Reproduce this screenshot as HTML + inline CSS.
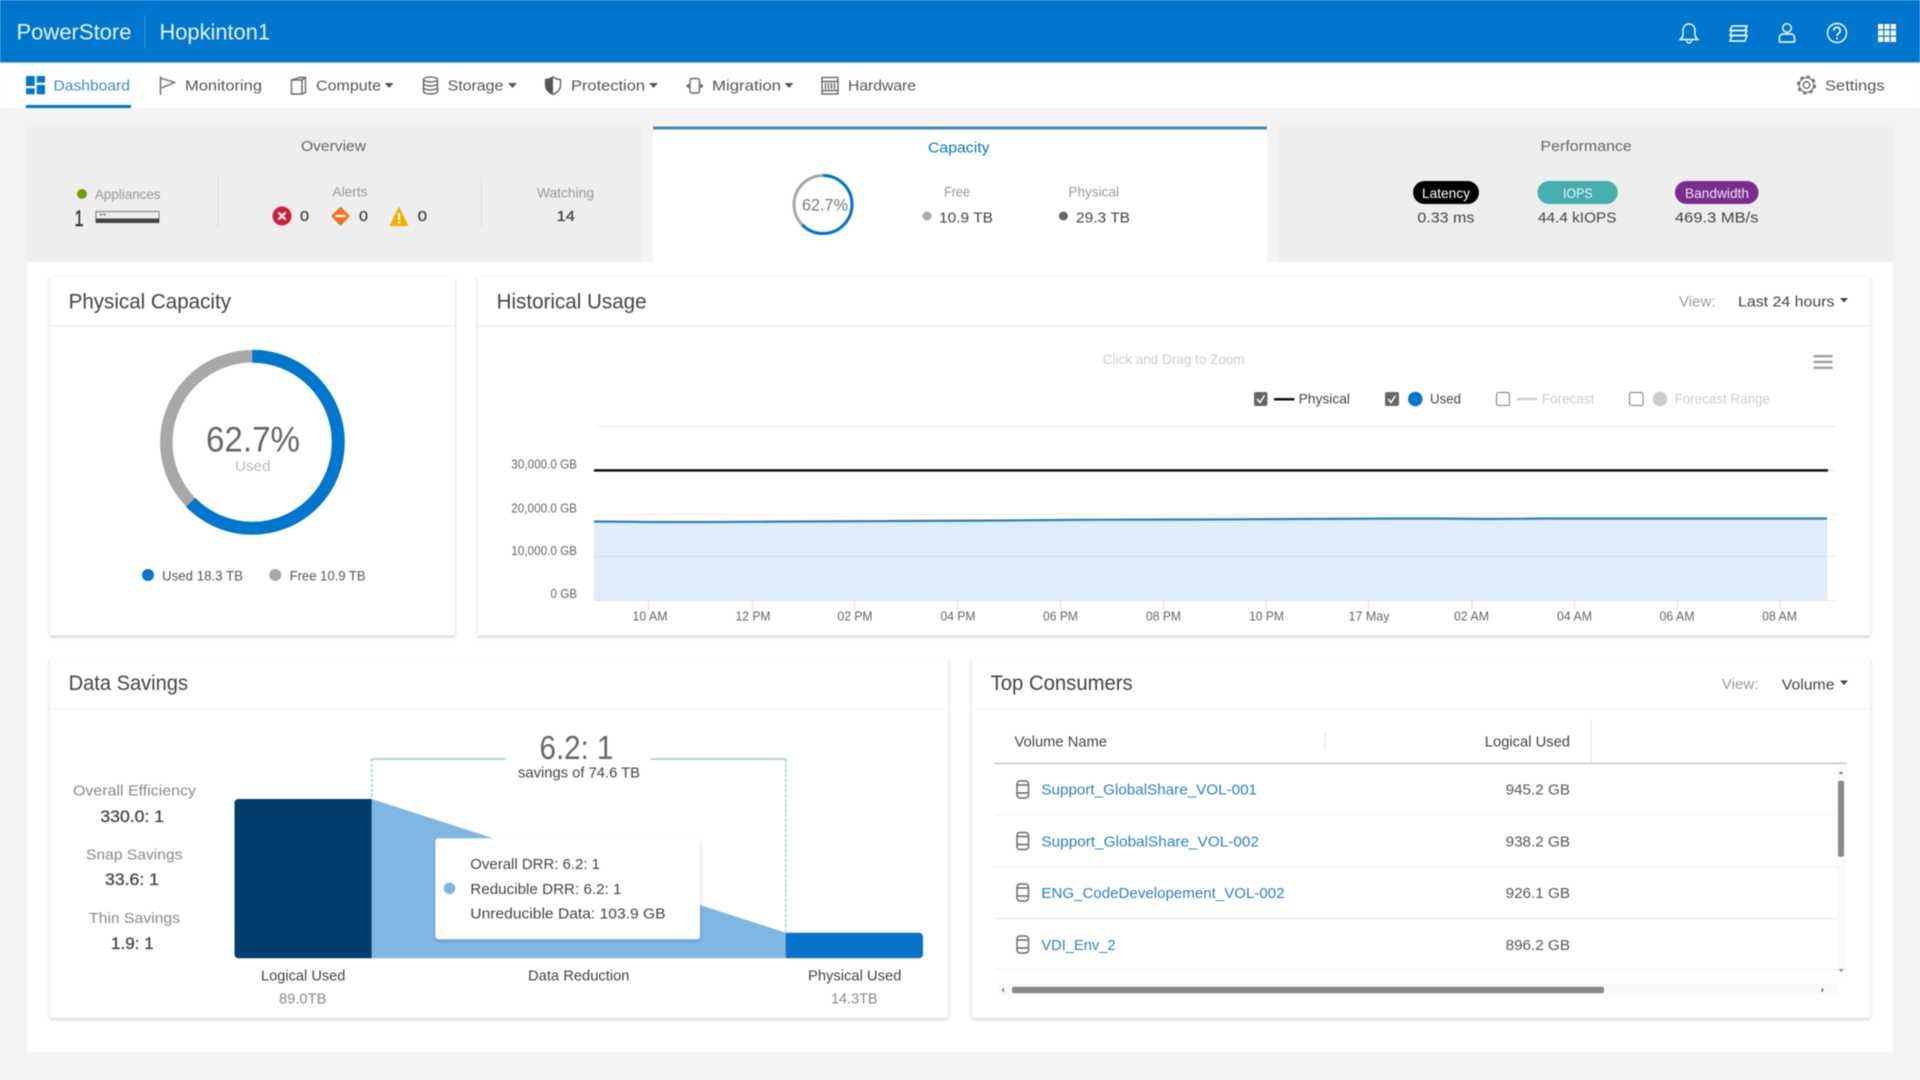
<!DOCTYPE html>
<html lang="en">
<head>
<meta charset="utf-8">
<title>PowerStore Dashboard</title>
<style>
html,body{margin:0;padding:0;width:1920px;height:1080px;overflow:hidden;background:#f3f3f3}
svg{display:block;filter:blur(.55px)}
text{font-family:"Liberation Sans",sans-serif;font-size:15px;fill:#444}
.nav{font-size:15px;fill:#555}
.g{fill:#8a8a8a}
.lg{fill:#999;font-size:14px}
.d{fill:#444}
.h{font-size:21px;fill:#444}
.t{font-size:22px;fill:#e8f3fb}
.c{font-size:12.5px;fill:#666}
.ic{fill:none;stroke:#666;stroke-width:1.4}
.w{fill:none;stroke:#fff;stroke-width:1.4}
.l{fill:#2a7fc4;font-size:15px}
.m{stroke:#444;stroke-width:.3}
</style>
</head>
<body>
<svg width="1920" height="1080" viewBox="0 0 1920 1080" xmlns="http://www.w3.org/2000/svg">
<defs>
<filter id="s" x="-5%" y="-5%" width="110%" height="112%"><feDropShadow dx="0" dy="1.5" stdDeviation="1.6" flood-color="#000" flood-opacity=".22"/></filter>
</defs>
<rect width="1920" height="1080" fill="#f3f3f3"/>

<!-- header -->
<rect width="1920" height="62" fill="#0076ce"/>
<rect y="62" width="1920" height="1" fill="#7db8e6"/>
<text class="t" x="16.5" y="39.5" textLength="115" lengthAdjust="spacingAndGlyphs">PowerStore</text>
<rect x="144.5" y="15" width="1" height="33" fill="#3a93d8"/>
<text class="t" x="159.5" y="39.5" textLength="110.5" lengthAdjust="spacingAndGlyphs">Hopkinton1</text>

<g class="w">
<path d="M1689 24c-4 0-6 3-6 7v4c0 2-1.800 3-3 4.500h18c-1.200-1.500-3-2.500-3-4.500v-4c0-4-2-7-6-7z"/>
<path d="M1686.500 40.500a2.500 2.500 0 0 0 5 0"/>
<path d="M1732 26H1747L1745 30.500H1730Z"/>
<path d="M1732 30.500H1747L1745 35.500H1730Z"/>
<path d="M1732 35.500H1747L1745 41H1730Z"/>
<circle cx="1787" cy="28" r="4.300"/>
<path d="M1779.500 42v-4.500c0-2 1.500-3.500 3.500-3.500h8c2 0 3.500 1.500 3.500 3.500v4.500z"/>
<circle cx="1837" cy="33" r="9.500"/>
<path d="M1833.800 30.500a3.200 3.200 0 1 1 5 2.600c-1.100.8-1.800 1.400-1.800 2.900" stroke-width="1.600"/>
</g>
<circle cx="1837" cy="38.500" r="1" fill="#fff"/>
<g fill="#fff">
<rect x="1878" y="24" width="5.200" height="5.200"/><rect x="1884.400" y="24" width="5.200" height="5.200"/><rect x="1890.800" y="24" width="5.200" height="5.200"/>
<rect x="1878" y="30.400" width="5.200" height="5.200"/><rect x="1884.400" y="30.400" width="5.200" height="5.200"/><rect x="1890.800" y="30.400" width="5.200" height="5.200"/>
<rect x="1878" y="36.800" width="5.200" height="5.200"/><rect x="1884.400" y="36.800" width="5.200" height="5.200"/><rect x="1890.800" y="36.800" width="5.200" height="5.200"/>
</g>

<!-- nav -->
<rect y="63" width="1920" height="45" fill="#fff"/>
<g fill="#0076ce">
<rect x="26" y="76" width="8.700" height="10"/><rect x="36.700" y="76" width="8.300" height="6.700"/>
<rect x="26" y="88.300" width="8.700" height="6"/><rect x="36.700" y="85" width="8.300" height="9.300"/>
</g>
<text class="nav" style="fill:#3a8bcc" x="53.500" y="90.500" textLength="76.500" lengthAdjust="spacingAndGlyphs">Dashboard</text>
<rect x="26" y="105" width="105" height="3" fill="#0076ce"/>

<path class="ic" d="M160.500 76.500v18.500M160.500 78l14 4.500-13 5.500"/>
<text class="nav" x="185" y="90.500" textLength="77" lengthAdjust="spacingAndGlyphs">Monitoring</text>

<path class="ic" d="M291.500 80L300 77.500H305.500V92.500L302 94H291.500ZM302 80V94M291.500 80H302L305.500 77.500"/>
<text class="nav" x="316" y="90.500" textLength="65" lengthAdjust="spacingAndGlyphs">Compute</text>
<path d="M384.600 83h9l-4.500 5z" fill="#555"/>

<g class="ic">
<ellipse cx="430.500" cy="79.500" rx="7" ry="2.500"/>
<path d="M423.500 79.500v12c0 1.400 3 2.500 7 2.500s7-1.100 7-2.500v-12M423.500 83.500c0 1.400 3 2.500 7 2.500s7-1.100 7-2.500M423.500 87.500c0 1.400 3 2.500 7 2.500s7-1.100 7-2.500"/>
</g>
<text class="nav" x="447.600" y="90.500" textLength="55.800" lengthAdjust="spacingAndGlyphs">Storage</text>
<path d="M508 83h9l-4.500 5z" fill="#555"/>

<path class="ic" d="M553 77c-3 2-6 2.500-7.500 2.500v5.500c0 5 3.500 7.500 7.500 9.500 4-2 7.500-4.500 7.500-9.500v-5.500c-1.500 0-4.500-.5-7.500-2.500z"/>
<path d="M553 77c-3 2-6 2.500-7.500 2.500v5.500c0 5 3.500 7.500 7.500 9.500z" fill="#555"/>
<text class="nav" x="571" y="90.500" textLength="74" lengthAdjust="spacingAndGlyphs">Protection</text>
<path d="M649 83h9l-4.500 5z" fill="#555"/>

<rect class="ic" x="690" y="78.500" width="9.500" height="14.500" rx="2"/>
<path d="M689 83.500l-3 2.500 3 2.500zM700.500 83.500l3 2.500-3 2.500z" fill="#555"/>
<text class="nav" x="712" y="90.500" textLength="69" lengthAdjust="spacingAndGlyphs">Migration</text>
<path d="M784.500 83h9l-4.500 5z" fill="#555"/>

<rect class="ic" x="822" y="77.500" width="16" height="16.500"/>
<path class="ic" d="M822 81.500h16M825.500 83v6M828.500 83v6M831.500 83v6M834.500 83v6M822 90.500h16"/>
<text class="nav" x="848" y="90.500" textLength="68" lengthAdjust="spacingAndGlyphs">Hardware</text>

<circle cx="1806.500" cy="85" r="3.300" fill="none" stroke="#666" stroke-width="1.300"/>
<circle cx="1806.500" cy="85" r="7.300" fill="none" stroke="#666" stroke-width="1.200"/>
<circle cx="1806.500" cy="85" r="8.700" fill="none" stroke="#666" stroke-width="1.700" stroke-dasharray="3.300 3.530"/>
<text class="nav" x="1825" y="90.500" textLength="59.700" lengthAdjust="spacingAndGlyphs">Settings</text>

<!-- white body panel -->
<rect x="27" y="262" width="1866" height="790" fill="#fff"/>

<!-- tabs -->
<rect x="27" y="127" width="615" height="135" fill="#eeeeee"/>
<rect x="653" y="126.500" width="614" height="136" fill="#fff"/>
<rect x="653" y="126.500" width="614" height="3" fill="#3f87c0"/>
<rect x="1278.500" y="127" width="615" height="135" fill="#eeeeee"/>

<!-- overview -->
<text x="301" y="151" style="fill:#666" textLength="65" lengthAdjust="spacingAndGlyphs">Overview</text>
<circle cx="82" cy="194" r="5" fill="#6ea204"/>
<text class="lg" x="95" y="199" textLength="65.500" lengthAdjust="spacingAndGlyphs">Appliances</text>
<text x="74.500" y="226" style="font-size:22px;fill:#333;stroke:#333;stroke-width:.4" textLength="9" lengthAdjust="spacingAndGlyphs">1</text>
<rect x="96" y="211.500" width="63" height="11" fill="#eee" stroke="#777" stroke-width="1"/>
<rect x="96" y="218.500" width="63" height="4.500" fill="#444"/>
<rect x="100" y="213.500" width="2" height="2" fill="#777"/><rect x="103.500" y="213.500" width="2" height="2" fill="#777"/>
<rect x="217.500" y="177" width="1" height="50" fill="#d8d8d8"/>
<text class="lg" x="332.500" y="196.700" textLength="35" lengthAdjust="spacingAndGlyphs">Alerts</text>
<circle cx="282" cy="216" r="9.500" fill="#ce1f3d"/>
<path d="M278.500 212.500l7 7M285.500 212.500l-7 7" stroke="#fff" stroke-width="2.200"/>
<text class="m" x="300" y="221" textLength="9" lengthAdjust="spacingAndGlyphs">0</text>
<path d="M340.500 206.500l9.500 9.500-9.500 10-9.500-10z" fill="#e87722"/>
<rect x="335.500" y="215" width="10" height="2" fill="#fff"/>
<text class="m" x="359" y="221" textLength="9" lengthAdjust="spacingAndGlyphs">0</text>
<path d="M399 206.500l9.500 19.500h-19z" fill="#f2af00"/>
<rect x="398" y="213" width="2" height="7" fill="#fff"/><rect x="398" y="221.500" width="2" height="2" fill="#fff"/>
<text class="m" x="417.600" y="221" textLength="9.400" lengthAdjust="spacingAndGlyphs">0</text>
<rect x="481" y="177" width="1" height="50" fill="#d8d8d8"/>
<text class="lg" x="537" y="197.500" textLength="57" lengthAdjust="spacingAndGlyphs">Watching</text>
<text class="m" x="556.600" y="221" textLength="18.400" lengthAdjust="spacingAndGlyphs">14</text>

<!-- capacity -->
<text x="928" y="152.700" style="fill:#0076ce;font-size:15px" textLength="61.500" lengthAdjust="spacingAndGlyphs">Capacity</text>
<circle cx="823" cy="204.500" r="29" fill="none" stroke="#a8a8a8" stroke-width="3"/>
<circle cx="823" cy="204.500" r="29" fill="none" stroke="#0076ce" stroke-width="3" stroke-dasharray="114.200 182.200" transform="rotate(-90 823 204.500)"/>
<text x="802" y="210.500" style="font-size:17px;fill:#777" textLength="46" lengthAdjust="spacingAndGlyphs">62.7%</text>
<text class="lg" x="944" y="196.500" textLength="26" lengthAdjust="spacingAndGlyphs">Free</text>
<circle cx="927" cy="216" r="4.500" fill="#aaa"/>
<text x="939" y="222.500" textLength="54" lengthAdjust="spacingAndGlyphs">10.9 TB</text>
<text class="lg" x="1068.400" y="196.500" textLength="50.600" lengthAdjust="spacingAndGlyphs">Physical</text>
<circle cx="1063.400" cy="216" r="4.500" fill="#666"/>
<text x="1076" y="222.500" textLength="54" lengthAdjust="spacingAndGlyphs">29.3 TB</text>

<!-- performance -->
<text x="1540.500" y="151" style="fill:#666" textLength="91.300" lengthAdjust="spacingAndGlyphs">Performance</text>
<rect x="1413" y="181" width="66" height="23" rx="11.500" fill="#000"/>
<text x="1422" y="198" style="fill:#fff;font-size:14px" textLength="48" lengthAdjust="spacingAndGlyphs">Latency</text>
<rect x="1537.500" y="181" width="80.200" height="23" rx="11.500" fill="#45aeae"/>
<text x="1563" y="198" style="fill:#e8f5f5;font-size:14px" textLength="29.600" lengthAdjust="spacingAndGlyphs">IOPS</text>
<rect x="1675" y="181" width="83.500" height="23" rx="11.500" fill="#7b2c8f"/>
<text x="1685" y="198" style="fill:#f0e6f3;font-size:14px" textLength="64" lengthAdjust="spacingAndGlyphs">Bandwidth</text>
<text x="1417.400" y="222.500" textLength="57" lengthAdjust="spacingAndGlyphs">0.33 ms</text>
<text x="1538" y="222.500" textLength="78.500" lengthAdjust="spacingAndGlyphs">44.4 kIOPS</text>
<text x="1675" y="222.500" textLength="83.500" lengthAdjust="spacingAndGlyphs">469.3 MB/s</text>

<!-- cards -->
<rect x="50" y="277" width="405" height="358.500" fill="#fff" filter="url(#s)"/>
<rect x="477.600" y="277" width="1392.400" height="358.500" fill="#fff" filter="url(#s)"/>
<rect x="50" y="659.300" width="898" height="358.700" fill="#fff" filter="url(#s)"/>
<rect x="972" y="659.300" width="898" height="358.700" fill="#fff" filter="url(#s)"/>
<rect x="50" y="325" width="405" height="1.200" fill="#ececec"/>
<rect x="477.600" y="325" width="1392.400" height="1.200" fill="#ececec"/>
<rect x="50" y="708.500" width="898" height="1" fill="#f4f4f4"/>
<rect x="972" y="708.500" width="898" height="1" fill="#f4f4f4"/>

<!-- physical capacity -->
<text class="h" x="68.600" y="308.500" textLength="162.400" lengthAdjust="spacingAndGlyphs">Physical Capacity</text>
<circle cx="252.300" cy="442.300" r="86" fill="none" stroke="#a8a8a8" stroke-width="12.500"/>
<circle cx="252.300" cy="442.300" r="86" fill="none" stroke="#0076ce" stroke-width="13" stroke-dasharray="338.800 201.600" transform="rotate(-90 252.300 442.300)"/>
<text x="206" y="451.700" style="font-size:35px;fill:#666" textLength="94" lengthAdjust="spacingAndGlyphs">62.7%</text>
<text x="235" y="471" style="font-size:15px;fill:#bbb" textLength="35.700" lengthAdjust="spacingAndGlyphs">Used</text>
<circle cx="148" cy="575" r="6" fill="#0076ce"/>
<text x="162" y="580.700" style="font-size:14px;fill:#555" textLength="81" lengthAdjust="spacingAndGlyphs">Used 18.3 TB</text>
<circle cx="275.300" cy="575" r="6" fill="#a8a8a8"/>
<text x="289.600" y="580.700" style="font-size:14px;fill:#555" textLength="76" lengthAdjust="spacingAndGlyphs">Free 10.9 TB</text>

<!-- historical usage -->
<text class="h" x="496.600" y="308.500" textLength="150" lengthAdjust="spacingAndGlyphs">Historical Usage</text>
<text x="1679" y="306.700" style="fill:#999" textLength="36.600" lengthAdjust="spacingAndGlyphs">View:</text>
<text x="1738" y="306.700" style="fill:#444" textLength="96.500" lengthAdjust="spacingAndGlyphs">Last 24 hours</text>
<path d="M1840 298h8l-4 4.500z" fill="#444"/>
<text x="1102.700" y="364" style="font-size:14px;fill:#ccc" textLength="142" lengthAdjust="spacingAndGlyphs">Click and Drag to Zoom</text>
<g fill="#a0a0a0"><rect x="1813.600" y="355" width="19" height="2.400"/><rect x="1813.600" y="360.800" width="19" height="2.400"/><rect x="1813.600" y="366.600" width="19" height="2.400"/></g>

<rect x="1254" y="392" width="13.400" height="14" rx="2" fill="#666"/>
<path d="M1257 399l3 3.500 4.500-7" fill="none" stroke="#fff" stroke-width="1.500"/>
<rect x="1274" y="398" width="20.400" height="2.500" fill="#111"/>
<text x="1298.600" y="403.500" style="font-size:14px;fill:#444" textLength="51.400" lengthAdjust="spacingAndGlyphs">Physical</text>
<rect x="1385" y="392" width="14" height="14" rx="2" fill="#666"/>
<path d="M1388 399l3 3.500 4.500-7" fill="none" stroke="#fff" stroke-width="1.500"/>
<circle cx="1415.300" cy="399" r="7.300" fill="#0076ce"/>
<text x="1430" y="403.500" style="font-size:14px;fill:#444" textLength="31" lengthAdjust="spacingAndGlyphs">Used</text>
<rect x="1496.500" y="392.500" width="13" height="13" rx="2" fill="#fff" stroke="#777"/>
<rect x="1517" y="398" width="20" height="2.200" fill="#ccc"/>
<text x="1541.700" y="403.500" style="font-size:14px;fill:#ccc" textLength="52.700" lengthAdjust="spacingAndGlyphs">Forecast</text>
<rect x="1629.500" y="392.500" width="13.500" height="13" rx="2" fill="#fff" stroke="#777"/>
<circle cx="1660" cy="399" r="7.300" fill="#ccc"/>
<text x="1674.600" y="403.500" style="font-size:14px;fill:#ccc" textLength="95.400" lengthAdjust="spacingAndGlyphs">Forecast Range</text>

<g fill="#ececec">
<rect x="594" y="426" width="1241.700" height="1"/>
<rect x="594" y="470" width="1241.700" height="1"/>
<rect x="594" y="514" width="1241.700" height="1"/>
<rect x="594" y="556" width="1241.700" height="1"/>
<rect x="594" y="600" width="1241.700" height="1"/>
</g>
<path d="M594 521.500L650 522 715 522 800 521.500 900 521 1000 520.500 1100 519.700 1200 519.500 1300 519 1400 518.500 1440 518.500 1490 519 1550 518.500 1827 518.500V600.500H594z" fill="#0076ce" fill-opacity=".13"/>
<path d="M594 521.500L650 522 715 522 800 521.500 900 521 1000 520.500 1100 519.700 1200 519.500 1300 519 1400 518.500 1440 518.500 1490 519 1550 518.500 1827 518.500" fill="none" stroke="#2d7fc1" stroke-width="2.200"/>
<rect x="594" y="469.200" width="1234" height="2.400" fill="#0a0a0a"/>

<g fill="#dcdcdc">
<rect x="648" y="600" width="1" height="10"/><rect x="752" y="600" width="1" height="10"/><rect x="854" y="600" width="1" height="10"/><rect x="957" y="600" width="1" height="10"/><rect x="1060" y="600" width="1" height="10"/><rect x="1163" y="600" width="1" height="10"/><rect x="1265.500" y="600" width="1" height="10"/><rect x="1368" y="600" width="1" height="10"/><rect x="1471.500" y="600" width="1" height="10"/><rect x="1574" y="600" width="1" height="10"/><rect x="1677" y="600" width="1" height="10"/><rect x="1779.500" y="600" width="1" height="10"/>
</g>
<text class="c" x="511.300" y="468.500" textLength="65.700" lengthAdjust="spacingAndGlyphs">30,000.0 GB</text>
<text class="c" x="511.300" y="512.300" textLength="65.700" lengthAdjust="spacingAndGlyphs">20,000.0 GB</text>
<text class="c" x="511.300" y="555" textLength="65.700" lengthAdjust="spacingAndGlyphs">10,000.0 GB</text>
<text class="c" x="550.500" y="598" textLength="26.500" lengthAdjust="spacingAndGlyphs">0 GB</text>
<text class="c" x="632.500" y="620.700" textLength="35" lengthAdjust="spacingAndGlyphs">10 AM</text>
<text class="c" x="735.500" y="620.700" textLength="35" lengthAdjust="spacingAndGlyphs">12 PM</text>
<text class="c" x="837.500" y="620.700" textLength="35" lengthAdjust="spacingAndGlyphs">02 PM</text>
<text class="c" x="940.500" y="620.700" textLength="35" lengthAdjust="spacingAndGlyphs">04 PM</text>
<text class="c" x="1043" y="620.700" textLength="35" lengthAdjust="spacingAndGlyphs">06 PM</text>
<text class="c" x="1146" y="620.700" textLength="35" lengthAdjust="spacingAndGlyphs">08 PM</text>
<text class="c" x="1249" y="620.700" textLength="35" lengthAdjust="spacingAndGlyphs">10 PM</text>
<text class="c" x="1348.500" y="620.700" textLength="41" lengthAdjust="spacingAndGlyphs">17 May</text>
<text class="c" x="1454" y="620.700" textLength="35" lengthAdjust="spacingAndGlyphs">02 AM</text>
<text class="c" x="1557" y="620.700" textLength="35" lengthAdjust="spacingAndGlyphs">04 AM</text>
<text class="c" x="1659.500" y="620.700" textLength="35" lengthAdjust="spacingAndGlyphs">06 AM</text>
<text class="c" x="1762" y="620.700" textLength="35" lengthAdjust="spacingAndGlyphs">08 AM</text>

<!-- data savings -->
<text class="h" x="68.600" y="690" textLength="119.400" lengthAdjust="spacingAndGlyphs">Data Savings</text>
<text x="73" y="795.700" style="fill:#888" textLength="123" lengthAdjust="spacingAndGlyphs">Overall Efficiency</text>
<text class="m" x="100.400" y="822" style="font-size:16.500px" textLength="63.600" lengthAdjust="spacingAndGlyphs">330.0: 1</text>
<text x="86" y="859.300" style="fill:#888" textLength="96.500" lengthAdjust="spacingAndGlyphs">Snap Savings</text>
<text class="m" x="105" y="885" style="font-size:16.500px" textLength="54" lengthAdjust="spacingAndGlyphs">33.6: 1</text>
<text x="89" y="923" style="fill:#888" textLength="91" lengthAdjust="spacingAndGlyphs">Thin Savings</text>
<text class="m" x="111" y="949" style="font-size:16.500px" textLength="42.700" lengthAdjust="spacingAndGlyphs">1.9: 1</text>

<path d="M371.700 799L785.700 932.700V958.300H371.700z" fill="#7fb7e4"/>
<path d="M238.500 799H371.700V958.300H238.500a4 4 0 0 1-4-4V803a4 4 0 0 1 4-4z" fill="#003e6e"/>
<path d="M785.700 932.700H919a4 4 0 0 1 4 4V954.300a4 4 0 0 1-4 4H785.700z" fill="#0a72ca"/>
<path d="M371.700 759H506.400M651 759H785.700" fill="none" stroke="#a9d0ee" stroke-width="1.800"/>
<path d="M371.700 759V799M785.700 759V932.700" fill="none" stroke="#6fb0e2" stroke-width="1" stroke-dasharray="3 2"/>
<text x="539.500" y="759" style="font-size:33px;fill:#666" textLength="74" lengthAdjust="spacingAndGlyphs">6.2: 1</text>
<text x="518" y="777.700" style="fill:#444" textLength="122" lengthAdjust="spacingAndGlyphs">savings of 74.6 TB</text>

<rect x="435.400" y="838.300" width="264.600" height="101" rx="3" fill="#fff" filter="url(#s)"/>
<circle cx="449.500" cy="888.300" r="5.800" fill="#7fb7e4"/>
<text x="470.300" y="869" style="fill:#444" textLength="129.700" lengthAdjust="spacingAndGlyphs">Overall DRR: 6.2: 1</text>
<text x="470.300" y="894" style="fill:#444" textLength="151.200" lengthAdjust="spacingAndGlyphs">Reducible DRR: 6.2: 1</text>
<text x="470.300" y="918.700" style="fill:#444" textLength="195.300" lengthAdjust="spacingAndGlyphs">Unreducible Data: 103.9 GB</text>

<text x="261" y="980.700" style="fill:#444" textLength="84.400" lengthAdjust="spacingAndGlyphs">Logical Used</text>
<text x="279" y="1003.300" style="fill:#888" textLength="47.400" lengthAdjust="spacingAndGlyphs">89.0TB</text>
<text x="528" y="980.700" style="fill:#444" textLength="101.500" lengthAdjust="spacingAndGlyphs">Data Reduction</text>
<text x="808" y="980.700" style="fill:#444" textLength="93.400" lengthAdjust="spacingAndGlyphs">Physical Used</text>
<text x="831" y="1003.300" style="fill:#888" textLength="46.500" lengthAdjust="spacingAndGlyphs">14.3TB</text>

<!-- top consumers -->
<text class="h" x="990.600" y="690" textLength="142.100" lengthAdjust="spacingAndGlyphs">Top Consumers</text>
<text x="1721.800" y="689" style="fill:#999" textLength="36.700" lengthAdjust="spacingAndGlyphs">View:</text>
<text x="1781.800" y="689.500" style="fill:#444" textLength="52.700" lengthAdjust="spacingAndGlyphs">Volume</text>
<path d="M1840 680.500h8l-4 4.500z" fill="#444"/>

<text x="1014.500" y="746.700" style="fill:#444;font-size:14.500px" textLength="92.500" lengthAdjust="spacingAndGlyphs">Volume Name</text>
<text x="1484.800" y="746.700" style="fill:#444;font-size:14.500px" textLength="85.200" lengthAdjust="spacingAndGlyphs">Logical Used</text>
<rect x="1324.500" y="733" width="1" height="17" fill="#e2e2e2"/>
<rect x="1590.500" y="720" width="1" height="42" fill="#e2e2e2"/>
<rect x="994.300" y="762.700" width="852.400" height="1.300" fill="#bcbcbc"/>

<rect x="994.300" y="814" width="842" height="1" fill="#efefef"/>
<rect x="994.300" y="866.500" width="842" height="1" fill="#efefef"/>
<rect x="994.300" y="918" width="842" height="1" fill="#e6e6e6"/>
<rect x="994.300" y="969" width="842" height="1" fill="#efefef"/>

<g class="ic">
<rect x="1017" y="781" width="11.500" height="17" rx="3"/><path d="M1017 785h11.500M1017 793h11.500"/>
<rect x="1017" y="832.500" width="11.500" height="17" rx="3"/><path d="M1017 836.500h11.500M1017 844.500h11.500"/>
<rect x="1017" y="884" width="11.500" height="17" rx="3"/><path d="M1017 888h11.500M1017 896h11.500"/>
<rect x="1017" y="936" width="11.500" height="17" rx="3"/><path d="M1017 940h11.500M1017 948h11.500"/>
</g>
<text class="l" x="1041.400" y="794.300" textLength="215.600" lengthAdjust="spacingAndGlyphs">Support_GlobalShare_VOL-001</text>
<text class="l" x="1041.400" y="846.300" textLength="217.600" lengthAdjust="spacingAndGlyphs">Support_GlobalShare_VOL-002</text>
<text class="l" x="1041.400" y="898" textLength="243.200" lengthAdjust="spacingAndGlyphs">ENG_CodeDevelopement_VOL-002</text>
<text class="l" x="1041.400" y="949.800" textLength="74.100" lengthAdjust="spacingAndGlyphs">VDI_Env_2</text>
<text x="1505.600" y="794.300" style="fill:#555" textLength="64.400" lengthAdjust="spacingAndGlyphs">945.2 GB</text>
<text x="1505.600" y="846.300" style="fill:#555" textLength="64.400" lengthAdjust="spacingAndGlyphs">938.2 GB</text>
<text x="1505.600" y="898" style="fill:#555" textLength="64.400" lengthAdjust="spacingAndGlyphs">926.1 GB</text>
<text x="1505.600" y="949.800" style="fill:#555" textLength="64.400" lengthAdjust="spacingAndGlyphs">896.2 GB</text>

<rect x="1837" y="768" width="9" height="208" fill="#fafafa"/>
<rect x="1838" y="780.700" width="6" height="76" rx="2" fill="#888"/>
<path d="M1841 771l2.500 3h-5zM1841 972l2.500-3h-5z" fill="#888"/>
<rect x="998" y="984" width="840" height="11" fill="#fafafa"/>
<rect x="1012" y="986.700" width="592" height="6.600" rx="2" fill="#888"/>
<path d="M1001.500 990l2.500-2.500v5zM1824 990l-2.500-2.500v5z" fill="#777"/>
</svg>
</body>
</html>
